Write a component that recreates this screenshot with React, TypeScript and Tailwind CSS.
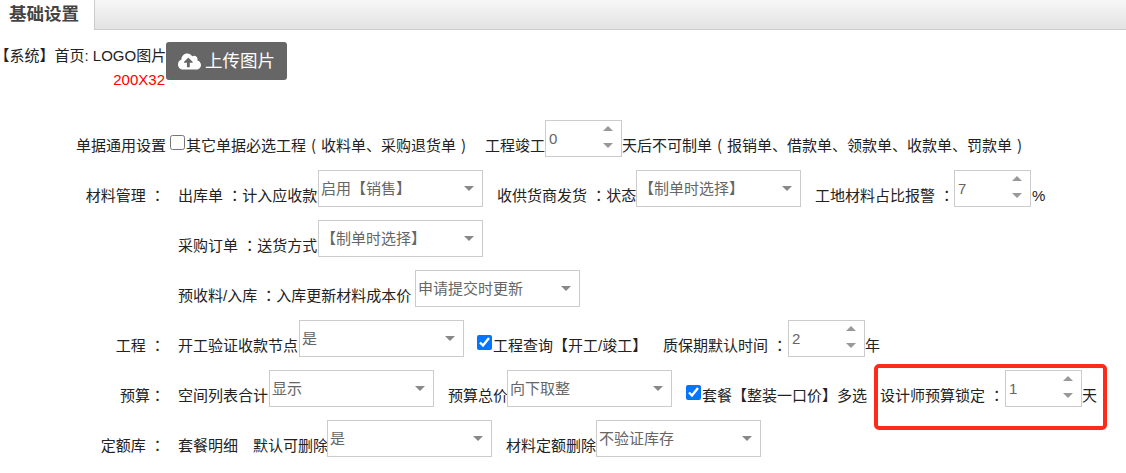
import React from 'react';
import { FaCloudUploadAlt } from 'react-icons/fa';

// Form controls are static here, only the look of the settings page matters

function Select({ value, className = '' }: { value: string; className?: string }) {
  return (
    <div className={`flex h-[37px] w-[165px] shrink-0 justify-between border border-[#ccc] bg-white pl-[2px] pr-[8px] text-[#666] ${className}`}>
      <span className="pt-[1px] leading-[34px]">{value}</span>
      <svg width="10" height="5" viewBox="0 0 10 5" className="mt-[15px]">
        <path d="M0 0h10L5 5z" fill="#888" />
      </svg>
    </div>
  );
}

function Spin({ value }: { value: string }) {
  return (
    <div className="flex h-[37px] w-[77px] shrink-0 justify-between border border-[#ccc] bg-white pl-[3px] pr-[8px] text-[#666]">
      <span className="pt-[1px] leading-[34px]">{value}</span>
      <div className="flex flex-col gap-[12px] pt-[5px]">
        <svg width="10" height="5" viewBox="0 0 10 5">
          <path d="M5 0l5 5H0z" fill="#999" />
        </svg>
        <svg width="10" height="5" viewBox="0 0 10 5">
          <path d="M0 0h10L5 5z" fill="#999" />
        </svg>
      </div>
    </div>
  );
}

function Text({ children, className = '' }: { children: React.ReactNode; className?: string }) {
  return <span className={`shrink-0 self-end whitespace-pre leading-[23px] ${className}`}>{children}</span>;
}

// full width colon / bracket sitting in the middle of its cell
function Cell({ children }: { children: string }) {
  return <span className="inline-block w-[15px] text-center [font-family:'Noto_Sans_CJK_TC',sans-serif]">{children}</span>;
}

function Row({ label, children }: { label?: React.ReactNode; children: React.ReactNode }) {
  return (
    <div className="mb-[13px] flex h-[37px]">
      <div className="w-[178px] shrink-0 self-end whitespace-pre pr-[13px] text-right leading-[23px]">{label}</div>
      {children}
    </div>
  );
}

export default function App() {
  return (
    <div className="relative h-[473px] w-[1126px] overflow-hidden bg-white text-[15px] text-[#222] [font-family:'Liberation_Sans','Noto_Sans_CJK_SC',sans-serif]">
      {/* tab bar */}
      <div className="flex h-[30px] bg-gradient-to-b from-[#f7f7f7] to-[#e2e2e2]">
        <div className="w-[94px] bg-white pl-[9px] text-[17.5px] font-bold leading-[29px] text-[#444]">基础设置</div>
        <div className="flex-1 border-b border-l border-[#ccc]" />
      </div>

      {/* logo upload */}
      <div className="flex h-[90px] pt-[12px]">
        <div className="w-[166px] pr-[1px] text-right">
          <div className="whitespace-nowrap pl-[2px] pt-[1px] text-left leading-[25px]">
            <span className="[font-feature-settings:'halt']">【</span>系统】首页: LOGO图片
          </div>
          <div className="leading-[24px] text-[#ff0000]">200X32</div>
        </div>
        <button className="flex h-[38px] w-[121px] items-center gap-[4px] rounded-[3px] bg-[#666] pl-[12px] text-[17.5px] text-white">
          <FaCloudUploadAlt size={23} />
          上传图片
        </button>
      </div>

      <div className="mb-[13px] flex h-[37px]">
        <Text className="w-[170px] pl-[76px]">单据通用设置</Text>
        <input type="checkbox" readOnly className="mt-[15px] h-[15px] w-[15px] shrink-0" />
        <Text className="ml-[1px] w-[359px]">
          其它单据必选工程<Cell>(</Cell>收料单、采购退货单<Cell>)</Cell>
          <span className="ml-[14px]">工程竣工</span>
        </Text>
        <Spin value="0" />
        <Text>
          天后不可制单<Cell>(</Cell>报销单、借款单、领款单、收款单、罚款单<Cell>)</Cell>
        </Text>
      </div>

      <Row label={<>材料管理 <Cell>：</Cell></>}>
        <Text className="w-[140px]">出库单 <Cell>：</Cell>计入应收款</Text>
        <Select value="启用【销售】" />
        <Text className="ml-[14px] w-[139px]">收供货商发货 <Cell>：</Cell>状态</Text>
        <Select value="【制单时选择】" />
        <Text className="ml-[14px] w-[139px]">工地材料占比报警 <Cell>：</Cell></Text>
        <Spin value="7" />
        <Text className="ml-[1px]">%</Text>
      </Row>

      <Row>
        <Text className="w-[140px]">采购订单 <Cell>：</Cell>送货方式</Text>
        <Select value="【制单时选择】" />
      </Row>

      <Row>
        <Text className="w-[237px]">预收料/入库 <Cell>：</Cell>入库更新材料成本价</Text>
        <Select value="申请提交时更新" />
      </Row>

      <Row label={<>工程 <Cell>：</Cell></>}>
        <Text className="w-[121px]">开工验证收款节点</Text>
        <Select value="是" />
        <input type="checkbox" checked readOnly className="ml-[13px] mt-[15px] h-[15px] w-[15px] shrink-0" />
        <Text className="ml-[1px] w-[170px]">工程查询【开工/竣工】</Text>
        <Text className="w-[125px]">质保期默认时间 <Cell>：</Cell></Text>
        <Spin value="2" />
        <Text>年</Text>
      </Row>

      <Row label={<>预算<Cell>：</Cell></>}>
        <Text className="w-[91px]">空间列表合计</Text>
        <Select value="显示" />
        <Text className="ml-[14px] w-[59px]">预算总价</Text>
        <Select value="向下取整" />
        <input type="checkbox" checked readOnly className="ml-[14px] mt-[15px] h-[15px] w-[15px] shrink-0" />
        <Text className="ml-[1px] w-[178px]">套餐【整装一口价】多选</Text>
        <Text className="w-[125px]">设计师预算锁定 <Cell>：</Cell></Text>
        <Spin value="1" />
        <Text>天</Text>
      </Row>

      <Row label={<>定额库 <Cell>：</Cell></>}>
        <Text className="w-[75px]">套餐明细</Text>
        <Text className="w-[74px]">默认可删除</Text>
        <Select value="是" />
        <Text className="ml-[14px] w-[90px]">材料定额删除</Text>
        <Select value="不验证库存" />
      </Row>

      {/* red annotation round the designer lock setting */}
      <div className="absolute left-[874px] top-[364px] h-[66px] w-[233px] rounded-[5px] border-[4px] border-[#ff2a1a]" />
    </div>
  );
}
